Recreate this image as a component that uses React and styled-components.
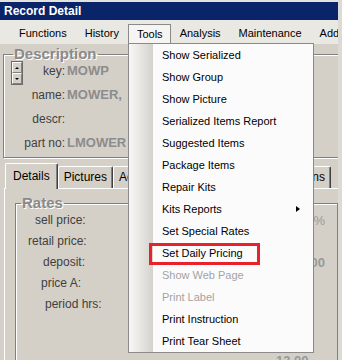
import React from 'react'
import styled, { createGlobalStyle } from 'styled-components'

const GlobalStyle = createGlobalStyle`
  html, body {
    margin: 0;
    padding: 0;
    background: #dcdad5;
    overflow: hidden;
  }
  body {
    font-family: Tahoma, "Liberation Sans", Arial, sans-serif;
    font-size: 11px;
  }
`

const Frame = styled.div`
  width: 338px;
  height: 360px;
  overflow: hidden;
  background: #d4d0c8;
  border-top: 2px solid #e4e2dd;
  box-sizing: border-box;
  display: flex;
  flex-direction: column;
`

const TitleBar = styled.div`
  height: 18px;
  flex: none;
  background: #0a246a;
  color: #fff;
  font: bold 12px/18px "Liberation Sans", Arial, sans-serif;
  padding-left: 4px;
`

const MenuBar = styled.div`
  height: 24px;
  flex: none;
  display: flex;
  align-items: flex-end;
  padding-left: 10px;
  background: #eae8e3;
  position: relative;
  z-index: 5;
`

const MenuItem = styled.div`
  position: relative;
  height: 20px;
  box-sizing: border-box;
  line-height: 19px;
  padding: ${(p) => (p.$open ? '0 7px 0 8px' : '0 9px')};
  color: #000;
  white-space: nowrap;
  background: ${(p) => (p.$open ? '#f6f5f3' : 'transparent')};
  border: ${(p) => (p.$open ? '1px solid #8a8a8a' : 'none')};
  border-bottom: none;
  z-index: ${(p) => (p.$open ? 3 : 'auto')};
`

const Dropdown = styled.div`
  position: absolute;
  top: calc(100% - 1px);
  left: -1px;
  width: 186px;
  box-sizing: border-box;
  border: 1px solid #8a8a8a;
  background: linear-gradient(to right, #f9f8f7 0, #d5d2cc 24px, transparent 24px), #fcfbfc;
  z-index: -1;
`

const DropItem = styled.div`
  position: relative;
  height: 22px;
  line-height: 22px;
  padding-left: 33px;
  color: ${(p) => (p.$disabled ? '#a3a3a3' : '#000')};

  ${(p) =>
    p.$marked &&
    `
    &::after {
      content: '';
      position: absolute;
      left: 20px;
      top: 1px;
      width: 111px;
      height: 22px;
      box-sizing: border-box;
      border: 3px solid #e8212b;
    }
  `}
`

const SubArrow = styled.span`
  position: absolute;
  right: 13px;
  top: 8px;
  width: 0;
  height: 0;
  border-left: 4px solid #000;
  border-top: 3.5px solid transparent;
  border-bottom: 3.5px solid transparent;
`

const GroupBox = styled.fieldset`
  margin: ${(p) => p.$top}px 0 0 ${(p) => p.$left}px;
  padding: 0;
  width: ${(p) => p.$width}px;
  box-sizing: border-box;
  border: 1px solid #808080;
  box-shadow: 1px 1px 0 #fff, inset 1px 1px 0 #fff;
  flex: none;
`

const Legend = styled.legend`
  margin-left: ${(p) => p.$offset}px;
  padding: 0 1px;
  font: bold 15px/14px "Liberation Sans", Arial, sans-serif;
  color: #8a8a8a;
  text-shadow: 1px 1px 0 #fff;
`

const FieldGrid = styled.div`
  display: grid;
  grid-template-columns: 54px auto;
  grid-auto-rows: 24px;
  column-gap: 2px;
  padding-left: 7px;
`

const LabelCell = styled.div`
  display: flex;
  justify-content: flex-end;
  align-items: flex-start;
`

const Label = styled.span`
  margin-left: auto;
  font: 12px/20px "Liberation Sans", Arial, sans-serif;
  color: #404040;
  white-space: nowrap;
`

const Value = styled.span`
  font: bold 13px/20px "Liberation Sans", Arial, sans-serif;
  color: #8c8c8c;
  white-space: nowrap;
`

const Spinner = styled.div`
  display: flex;
  flex-direction: column;
  width: 12px;
  height: 24px;
  box-sizing: border-box;
  border: 1px solid #6b6b6b;
  background: #d4d0c8;
`

const SpinButton = styled.div`
  flex: 1;
  display: flex;
  align-items: center;
  justify-content: center;
  border-top: 1px solid #fff;
  border-left: 1px solid #fff;
  border-bottom: 1px solid #808080;
  border-right: 1px solid #808080;

  &::before {
    content: '';
    width: 0;
    height: 0;
    border-left: 2px solid transparent;
    border-right: 2px solid transparent;
    ${(p) => (p.$down ? 'border-top: 2px solid #000;' : 'border-bottom: 2px solid #000;')}
  }
`

const TabStrip = styled.div`
  display: flex;
  align-items: flex-end;
  height: 25px;
  margin-top: 5px;
  padding: 0 7px 0 5px;
  flex: none;
`

const Tab = styled.div`
  position: relative;
  flex: none;
  box-sizing: border-box;
  height: ${(p) => (p.$active ? 26 : 22)}px;
  margin-bottom: ${(p) => (p.$active ? -1 : 0)}px;
  margin-left: ${(p) => (p.$last ? 'auto' : '0')};
  padding: 0 ${(p) => (p.$active ? 7 : 5)}px;
  font: 12px/${(p) => (p.$active ? 24 : 21)}px "Liberation Sans", Arial, sans-serif;
  color: #000;
  background: #d4d0c8;
  border-top: 1px solid #fff;
  border-left: 1px solid #fff;
  border-right: 1px solid #404040;
  box-shadow: inset -1px 0 0 #808080;
  border-radius: 2px 2px 0 0;
  z-index: ${(p) => (p.$active ? 2 : 1)};
`

const TabPanel = styled.div`
  flex: 1;
  margin-left: 4px;
  border-top: 1px solid #fff;
  border-left: 1px solid #fff;
  display: flex;
  flex-direction: column;
`

const RatesGrid = styled.div`
  display: grid;
  grid-template-columns: 125px 1fr 49px;
  grid-template-rows: repeat(5, 21px) 35px 21px;
  padding-right: 12px;
`

const RateLabel = styled.span`
  grid-column: 1;
  padding-left: ${(p) => p.$indent}px;
  font: 12px/21px "Liberation Sans", Arial, sans-serif;
  color: #404040;
  white-space: nowrap;
`

const RateValue = styled.span`
  grid-column: 3;
  grid-row: ${(p) => p.$row || 'auto'};
  justify-self: ${(p) => (p.$start ? 'start' : 'end')};
  font: ${(p) => (p.$bold ? 'bold 13px' : '13px')}/21px "Liberation Sans", Arial, sans-serif;
  color: #999;
  white-space: nowrap;
`

const menus = ['Functions', 'History', 'Tools', 'Analysis', 'Maintenance', 'Add']

const toolItems = [
  { label: 'Show Serialized' },
  { label: 'Show Group' },
  { label: 'Show Picture' },
  { label: 'Serialized Items Report' },
  { label: 'Suggested Items' },
  { label: 'Package Items' },
  { label: 'Repair Kits' },
  { label: 'Kits Reports', sub: true },
  { label: 'Set Special Rates' },
  { label: 'Set Daily Pricing', marked: true },
  { label: 'Show Web Page', disabled: true },
  { label: 'Print Label', disabled: true },
  { label: 'Print Instruction' },
  { label: 'Print Tear Sheet' },
]

const fields = [
  { label: 'key:', value: 'MOWP', spinner: true },
  { label: 'name:', value: 'MOWER,' },
  { label: 'descr:', value: '' },
  { label: 'part no:', value: 'LMOWER' },
]

const tabs = ['Details', 'Pictures', 'Accessories', 'Options']

const rates = [
  { label: 'sell price:', indent: 19, value: '%' },
  { label: 'retail price:', indent: 12, value: '' },
  { label: 'deposit:', indent: 27, value: '0.00', bold: true },
  { label: 'price A:', indent: 25, value: '' },
  { label: 'period hrs:', indent: 29, value: '' },
]

function ToolsMenu() {
  return (
    <Dropdown>
      {toolItems.map((item) => (
        <DropItem key={item.label} $disabled={item.disabled} $marked={item.marked}>
          {item.label}
          {item.sub && <SubArrow />}
        </DropItem>
      ))}
    </Dropdown>
  )
}

export default function App() {
  return (
    <>
      <GlobalStyle />
      <Frame>
        <TitleBar>Record Detail</TitleBar>
        <MenuBar>
          {menus.map((m) => (
            <MenuItem key={m} $open={m === 'Tools'}>
              {m}
              {m === 'Tools' && <ToolsMenu />}
            </MenuItem>
          ))}
        </MenuBar>

        <GroupBox $top={3} $left={3} $width={336}>
          <Legend $offset={9}>Description</Legend>
          <FieldGrid>
            {fields.map((f) => (
              <React.Fragment key={f.label}>
                <LabelCell>
                  {f.spinner && (
                    <Spinner>
                      <SpinButton />
                      <SpinButton $down />
                    </Spinner>
                  )}
                  <Label>{f.label}</Label>
                </LabelCell>
                <Value>{f.value}</Value>
              </React.Fragment>
            ))}
          </FieldGrid>
        </GroupBox>

        <TabStrip>
          {tabs.map((t, i) => (
            <Tab key={t} $active={i === 0} $last={i === tabs.length - 1}>
              {t}
            </Tab>
          ))}
        </TabStrip>
        <TabPanel>
          <GroupBox $top={7} $left={10} $width={323}>
            <Legend $offset={5}>Rates</Legend>
            <RatesGrid>
              {rates.map((r) => (
                <React.Fragment key={r.label}>
                  <RateLabel $indent={r.indent}>{r.label}</RateLabel>
                  <RateValue $bold={r.bold}>{r.value}</RateValue>
                </React.Fragment>
              ))}
              <RateValue $bold $start $row={7}>13.00</RateValue>
            </RatesGrid>
          </GroupBox>
        </TabPanel>
      </Frame>
    </>
  )
}
